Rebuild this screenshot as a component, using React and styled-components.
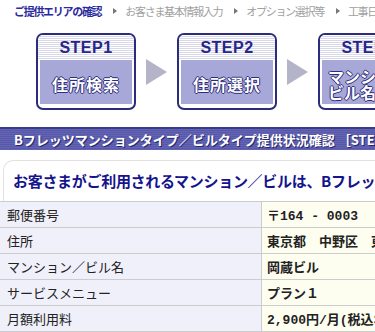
import React from 'react';
import styled, { createGlobalStyle } from 'styled-components';

const GlobalStyle = createGlobalStyle`
  body {
    margin: 0;
    background: #ffffff;
    font-family: 'Noto Sans CJK JP', 'Noto Sans', sans-serif;
  }
`;

const Page = styled.div`
  width: 375px;
  height: 332px;
  overflow: hidden;
  white-space: nowrap;
`;

const Crumbs = styled.div`
  display: flex;
  align-items: center;
  height: 22px;
  padding-left: 14px;
  font-size: 11px;
  letter-spacing: -1.3px;
`;

const Crumb = styled.span`
  color: ${(p) => (p.active ? '#2a2a9c' : '#a0a0a0')};
  font-weight: ${(p) => (p.active ? 'bold' : 'normal')};
`;

const CrumbArrow = styled.span`
  width: 0;
  height: 0;
  margin: 0 8px 0 12px;
  border-top: 3px solid transparent;
  border-bottom: 3px solid transparent;
  border-left: 4px solid #777777;
`;

const Steps = styled.div`
  display: flex;
  align-items: center;
  padding: 11px 0 0 36px;
`;

const StepBox = styled.div`
  flex: none;
  width: 100px;
  height: 77px;
  box-sizing: border-box;
  border: 2px solid #2c2c7c;
  border-radius: 7px;
  background: #ffffff;
  display: flex;
  flex-direction: column;
  overflow: hidden;
`;

const StepHead = styled.div`
  height: 25px;
  display: flex;
  align-items: center;
  justify-content: center;
  background: repeating-linear-gradient(
    to bottom,
    #ffffff 0px,
    #ffffff 1px,
    #d8d8e8 1px,
    #d8d8e8 2px
  );
  font-family: 'Liberation Sans', Arial, sans-serif;
  font-weight: bold;
  font-size: 16px;
  color: #25258a;
  letter-spacing: 0.5px;
`;

const StepBody = styled.div`
  flex: 1;
  margin: 0 2px 4px;
  padding-top: 3px;
  background: #a8a8d8;
  display: flex;
  align-items: center;
  justify-content: center;
  text-align: center;
  font-weight: bold;
  font-size: 16px;
  line-height: ${(p) => (p.small ? '16px' : '20px')};
  letter-spacing: ${(p) => (p.small ? '0' : '1px')};
  color: #ffffff;
  white-space: nowrap;
  text-shadow: 1px 0 0 #2c2c7c, -1px 0 0 #2c2c7c, 0 1px 0 #2c2c7c, 0 -1px 0 #2c2c7c;
`;

const StepArrow = styled.div`
  flex: none;
  width: 0;
  height: 0;
  margin: 0 10px;
  border-top: 13px solid transparent;
  border-bottom: 13px solid transparent;
  border-left: 21px solid #b4b4c8;
`;

const TitleBar = styled.div`
  margin-top: 17px;
  height: 23px;
  box-sizing: border-box;
  border-top: 2px solid #3a3a8c;
  padding-left: 14px;
  display: flex;
  align-items: center;
  background: repeating-linear-gradient(
    to bottom,
    #6464b4 0px,
    #6464b4 1px,
    #5858a8 1px,
    #5858a8 2px
  );
  color: #ffffff;
  font-size: 13px;
  font-weight: bold;
  text-shadow: 1px 1px 0 #26266a;
`;

const Panel = styled.div`
  margin: 10px 0 0 3px;
  border-top: 1px solid #e2e2e2;
  border-left: 1px solid #e2e2e2;
  border-top-left-radius: 10px;
  padding: 10px 0 10px 9px;
`;

const Heading = styled.h2`
  margin: 0;
  font-size: 15px;
  line-height: 20px;
  font-weight: bold;
  letter-spacing: -0.3px;
  color: #14148c;
`;

const Table = styled.div`
  display: grid;
  grid-template-columns: 261px 1fr;
  border-top: 1px solid #cccccc;
`;

const Label = styled.div`
  height: 25px;
  display: flex;
  align-items: center;
  padding-left: 7px;
  border-bottom: 1px solid #cccccc;
  background: #f0f0fa;
  font-size: 13px;
  color: #222222;
`;

const Value = styled.div`
  height: 25px;
  display: flex;
  align-items: center;
  padding-left: 5px;
  border-left: 1px solid #cccccc;
  border-bottom: 1px solid #cccccc;
  background: #fdfdf0;
  font-family: 'Liberation Mono', 'Noto Sans CJK JP', monospace;
  font-weight: bold;
  font-size: 13px;
  color: #222222;
  overflow: hidden;
`;

const rows = [
  ['郵便番号', '〒164 - 0003'],
  ['住所', '東京都　中野区　東中野'],
  ['マンション／ビル名', '岡蔵ビル'],
  ['サービスメニュー', 'プラン１'],
  ['月額利用料', '2,900円/月(税込3,045円/月)'],
];

function App() {
  return (
    <Page>
      <GlobalStyle />
      <Crumbs>
        <Crumb active>ご提供エリアの確認</Crumb>
        <CrumbArrow />
        <Crumb>お客さま基本情報入力</Crumb>
        <CrumbArrow />
        <Crumb>オプション選択等</Crumb>
        <CrumbArrow />
        <Crumb>工事日予約</Crumb>
      </Crumbs>
      <Steps>
        <StepBox>
          <StepHead>STEP1</StepHead>
          <StepBody>住所検索</StepBody>
        </StepBox>
        <StepArrow />
        <StepBox>
          <StepHead>STEP2</StepHead>
          <StepBody>住所選択</StepBody>
        </StepBox>
        <StepArrow />
        <StepBox>
          <StepHead>STEP3</StepHead>
          <StepBody small>
            マンション
            <br />
            ビル名確認
          </StepBody>
        </StepBox>
      </Steps>
      <TitleBar>Bフレッツマンションタイプ／ビルタイプ提供状況確認 ［STEP3］</TitleBar>
      <Panel>
        <Heading>お客さまがご利用されるマンション／ビルは、Bフレッツ提供中です。</Heading>
      </Panel>
      <Table>
        {rows.map(([label, value]) => (
          <React.Fragment key={label}>
            <Label>{label}</Label>
            <Value>{value}</Value>
          </React.Fragment>
        ))}
      </Table>
    </Page>
  );
}

export default App;
